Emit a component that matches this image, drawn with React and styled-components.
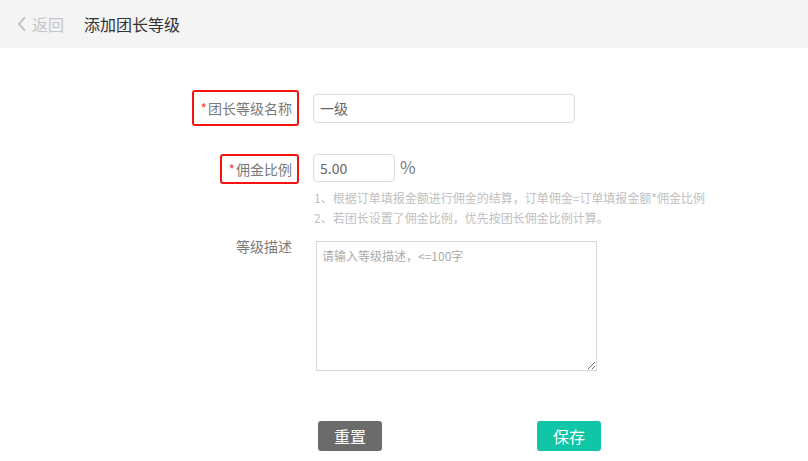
import React from "react";
import styled, { createGlobalStyle } from "styled-components";

const GlobalStyle = createGlobalStyle`
  body {
    margin: 0;
    background: #fff;
    font-family: "Noto Sans CJK SC", "Noto Sans", sans-serif;
  }
`;

const App = () => {
  return (
    <Page>
      <GlobalStyle />
      <Header>
        <Back>
          <svg width="10" height="16" viewBox="0 0 10 16">
            <polyline points="8,1 2,8 8,15" fill="none" stroke="#bdbdbd" strokeWidth="1.8" />
          </svg>
          返回
        </Back>
        <Title>添加团长等级</Title>
      </Header>
      <Form>
        <Row $top={42}>
          <LabelCell>
            <Label $marked $h={36}>
              <Star>*</Star>团长等级名称
            </Label>
          </LabelCell>
          <Input defaultValue="一级" $w={262} />
        </Row>
        <Row $top={28} $align="flex-start">
          <LabelCell>
            <Label $marked $h={30}>
              <Star>*</Star>佣金比例
            </Label>
          </LabelCell>
          <div>
            <Inline>
              <Input defaultValue="5.00" $w={82} $h={28} />
              <Percent>%</Percent>
            </Inline>
            <Hints>
              <div>1、根据订单填报金额进行佣金的结算，订单佣金=订单填报金额*佣金比例</div>
              <div>2、若团长设置了佣金比例，优先按团长佣金比例计算。</div>
            </Hints>
          </div>
        </Row>
        <Row $top={13} $align="flex-start">
          <LabelCell>
            <Label $h={20} $shift={-5}>等级描述</Label>
          </LabelCell>
          <TextArea placeholder="请输入等级描述，<=100字" />
        </Row>
        <Actions>
          <Button $bg="#6b6b6b">重置</Button>
          <Button $bg="#10c6a6">保存</Button>
        </Actions>
      </Form>
    </Page>
  );
};

const Page = styled.div`
  width: 808px;
  height: 461px;
  overflow: hidden;
`;

const Header = styled.div`
  height: 48px;
  background: #f4f4f4;
  display: flex;
  align-items: center;
  padding-left: 17px;
`;

const Back = styled.div`
  display: flex;
  align-items: center;
  gap: 5px;
  color: #c4c4c4;
  font-size: 16px;
  margin-right: 20px;
`;

const Title = styled.div`
  color: #333;
  font-size: 16px;
`;

const Form = styled.div`
  display: flex;
  flex-direction: column;
`;

const Row = styled.div`
  display: flex;
  align-items: ${(p) => p.$align || "center"};
  margin-top: ${(p) => p.$top}px;
`;

const LabelCell = styled.div`
  width: 299px;
  display: flex;
  justify-content: flex-end;
  margin-right: 14px;
  flex-shrink: 0;
`;

const Label = styled.div`
  display: flex;
  align-items: center;
  box-sizing: border-box;
  height: ${(p) => p.$h}px;
  margin-top: ${(p) => p.$shift || 0}px;
  padding: 0 5px 0 6px;
  font-size: 14px;
  color: #7a7a7a;
  border: 2.5px solid ${(p) => (p.$marked ? "#f5130f" : "transparent")};
  border-radius: 3px;
  white-space: nowrap;
`;

const Star = styled.span`
  color: #f04848;
  margin-right: 1px;
`;

const Input = styled.input`
  box-sizing: border-box;
  width: ${(p) => p.$w}px;
  height: ${(p) => p.$h || 29}px;
  border: 1px solid #dcdcdc;
  border-radius: 4px;
  padding: 0 6px;
  font-family: inherit;
  font-size: 14px;
  color: #666;
  outline: none;
`;

const Inline = styled.div`
  display: flex;
  align-items: center;
`;

const Percent = styled.span`
  margin-left: 5px;
  margin-top: -3px;
  font-size: 17px;
  color: #777;
`;

const Hints = styled.div`
  margin-top: 6px;
  font-size: 12px;
  line-height: 20px;
  color: #c0c0c0;
  padding-left: 1px;
`;

const TextArea = styled.textarea`
  box-sizing: border-box;
  width: 281px;
  height: 130px;
  margin-left: 3px;
  border: 1px solid #d6d6d6;
  padding: 5px 5px;
  font-family: inherit;
  font-size: 12px;
  color: #555;
  outline: none;
  &::placeholder {
    color: #aaa;
  }
`;

const Actions = styled.div`
  display: flex;
  gap: 155px;
  margin-top: 50px;
  margin-left: 318px;
`;

const Button = styled.button`
  width: 64px;
  height: 30px;
  border: none;
  border-radius: 3px;
  background: ${(p) => p.$bg};
  color: #fff;
  font-family: inherit;
  font-size: 16px;
  padding: 0;
`;

export default App;
